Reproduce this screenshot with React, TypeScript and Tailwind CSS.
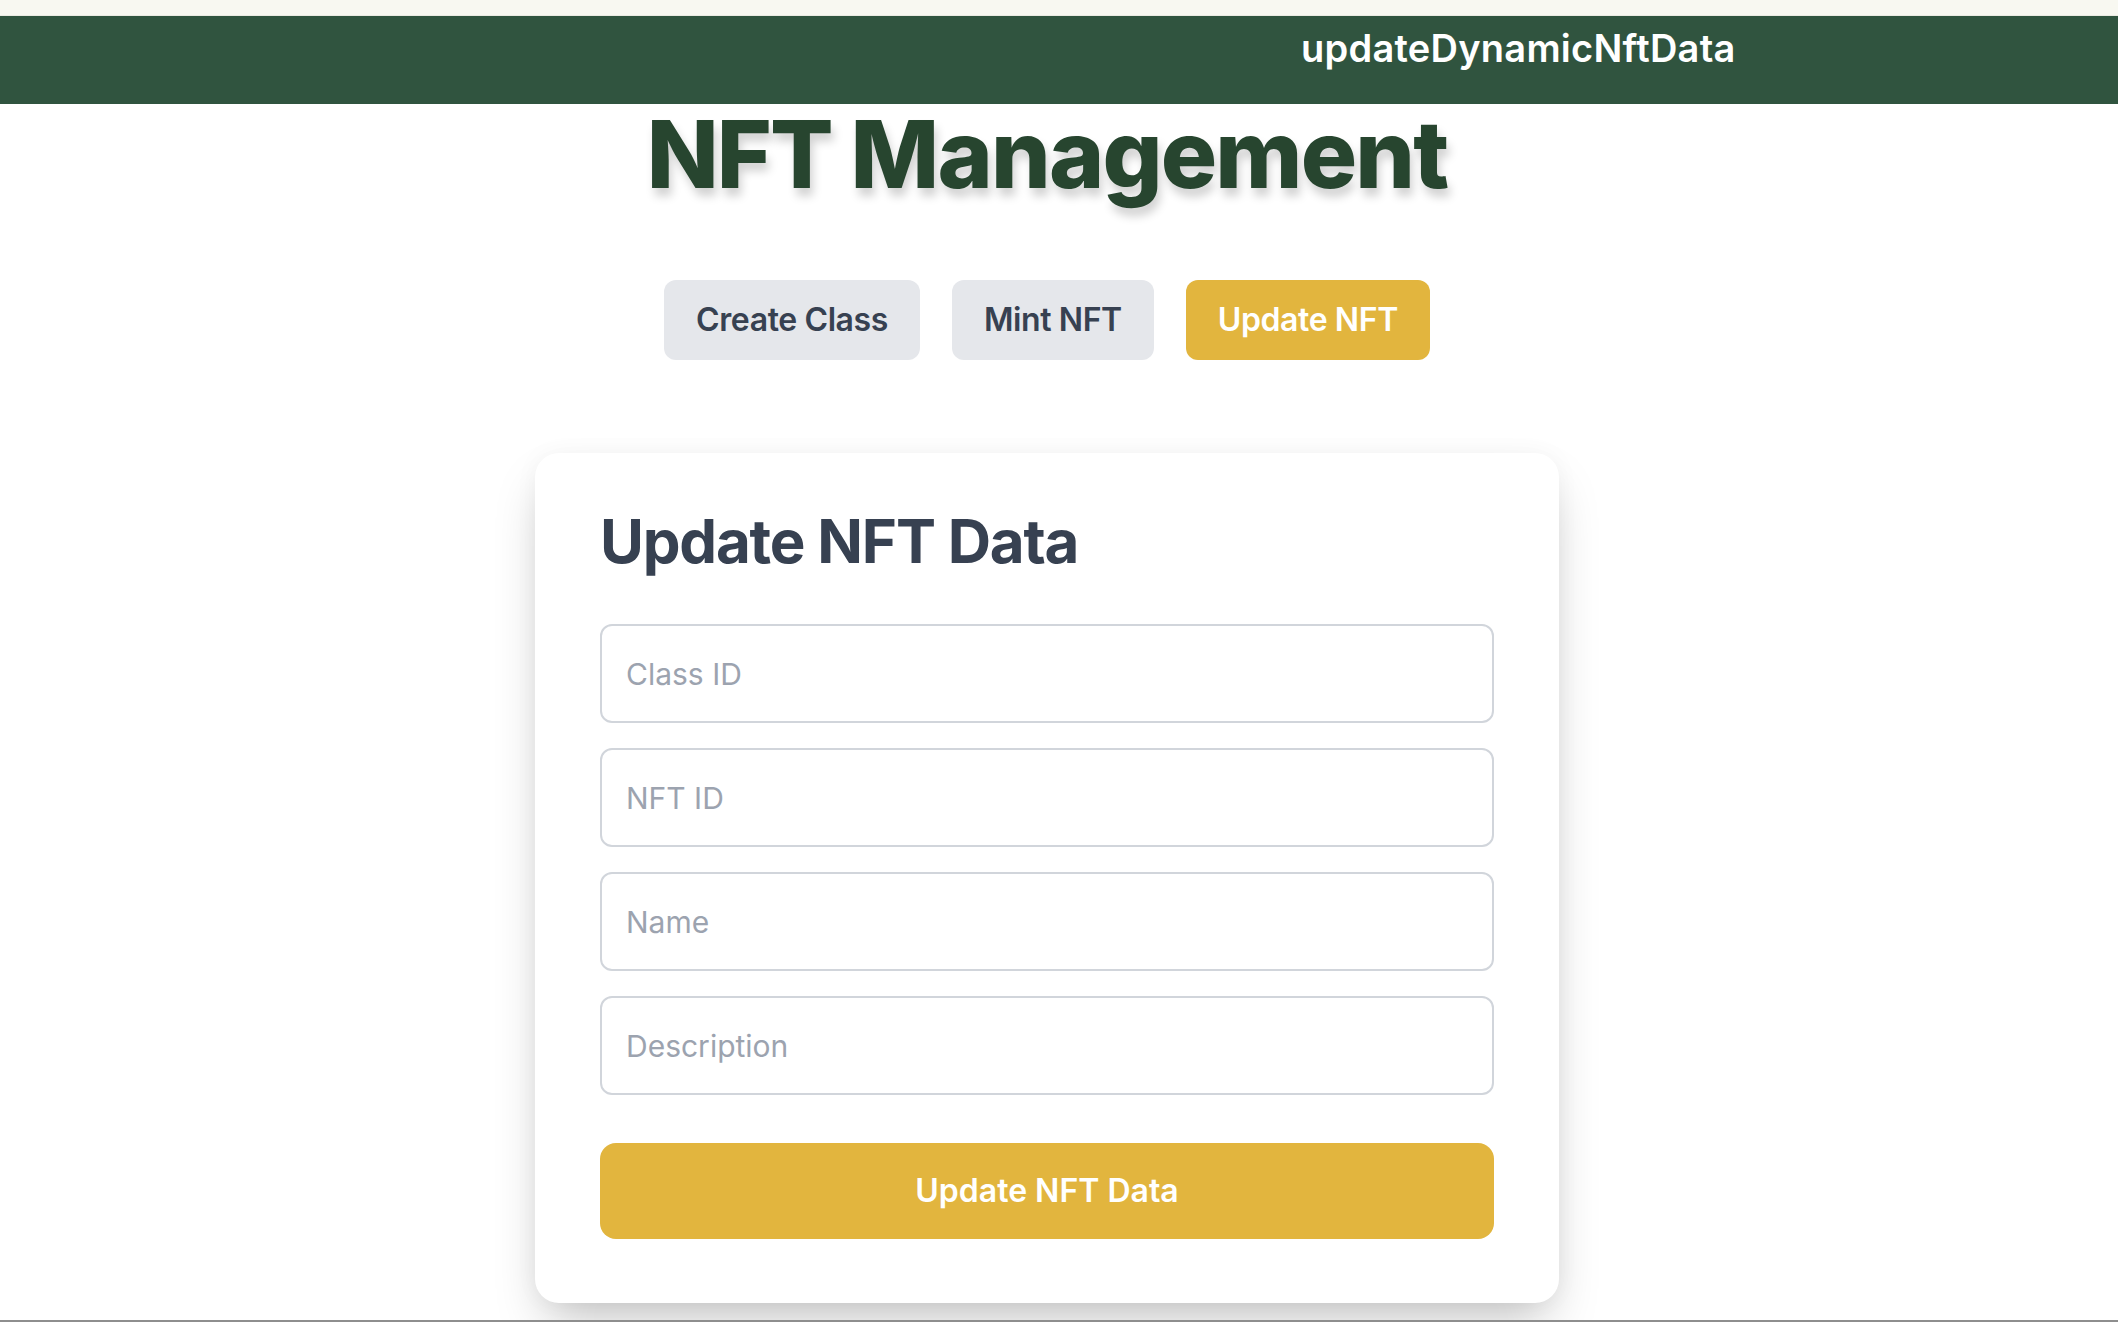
import React from "react";

export default function App() {
  const inputs = ["Class ID", "NFT ID", "Name", "Description"];
  return (
    <div
      className="h-[1322px] w-full overflow-hidden bg-white flex flex-col"
      style={{ fontFamily: "Inter, 'Noto Sans', sans-serif" }}
    >
      <div className="h-[16px] shrink-0 bg-[#f8f8f1] border-b border-[#ebebe3]" />
      <div className="h-[88px] shrink-0 bg-[#30543f] pl-[1301px] pt-[13px]">
        <span className="text-[38px] font-semibold leading-none text-white tracking-[0.25px]">
          updateDynamicNftData
        </span>
      </div>
      <main className="flex-1 flex flex-col items-center pr-[24px]">
        <h1 className="mt-[3px] text-[94px] font-extrabold leading-none text-[#27452f] tracking-[-1.8px] [text-shadow:3px_8px_10px_rgba(0,0,0,0.18)]">
          NFT Management
        </h1>
        <div className="mt-[79px] flex gap-8">
          <button className="h-[80px] px-8 rounded-xl bg-[#e5e7eb] text-[#374151] text-[32px] font-semibold leading-none tracking-[-0.4px]">
            Create Class
          </button>
          <button className="h-[80px] px-8 rounded-xl bg-[#e5e7eb] text-[#374151] text-[32px] font-semibold leading-none tracking-[-0.4px]">
            Mint NFT
          </button>
          <button className="h-[80px] px-8 rounded-xl bg-[#e2b53e] text-white text-[32px] font-semibold leading-none tracking-[-0.4px]">
            Update NFT
          </button>
        </div>
        <div className="mt-[93px] w-[1024px] h-[850px] shrink-0 bg-white rounded-3xl px-[65px] pt-[58px] shadow-[0_25px_50px_-12px_rgba(0,0,0,0.25),0_0_24px_rgba(0,0,0,0.04)]">
          <h2 className="text-[60px] font-bold leading-none text-[#374151] tracking-[-1.2px]">
            Update NFT Data
          </h2>
          <div className="mt-[53px] flex flex-col gap-[25px]">
            {inputs.map((p) => (
              <input
                key={p}
                placeholder={p}
                className="h-[99px] w-full rounded-xl border-2 border-[#d1d5db] px-[24px] text-[30px] text-[#374151] placeholder:text-[#9ca3af] outline-none bg-white"
              />
            ))}
          </div>
          <button className="mt-[48px] h-[96px] w-full rounded-2xl bg-[#e2b53e] text-white text-[32px] font-semibold leading-none">
            Update NFT Data
          </button>
        </div>
      </main>
      <div className="h-[2px] shrink-0 bg-[#8e8e8e]" />
    </div>
  );
}
